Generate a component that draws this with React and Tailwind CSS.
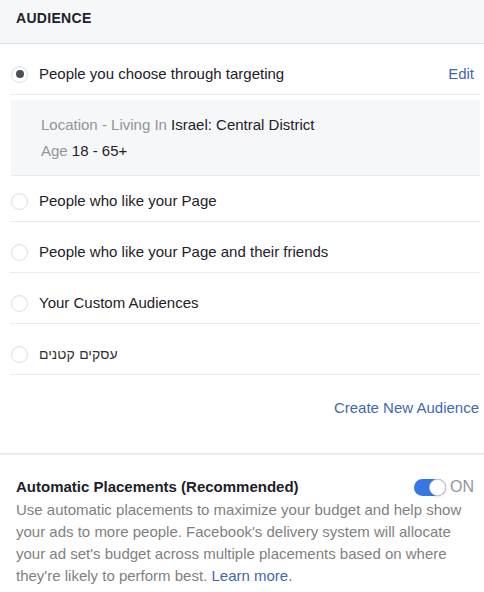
import { useState } from "react";

const options = [
  { label: "People who like your Page" },
  { label: "People who like your Page and their friends" },
  { label: "Your Custom Audiences" },
  { label: "עסקים קטנים", rtl: true },
];

function Radio({ checked }) {
  return (
    <span className="w-[17px] h-[17px] rounded-full border border-[#dddfe2] bg-white flex items-center justify-center shrink-0 shadow-[inset_0_1px_1px_rgba(0,0,0,0.04)]">
      {checked && <span className="w-[8px] h-[8px] rounded-full bg-[#4b4f56]"></span>}
    </span>
  );
}

export default function App() {
  const [selected, setSelected] = useState(-1);
  const [auto, setAuto] = useState(true);

  return (
    <div className="w-[484px] h-[592px] bg-white overflow-hidden font-['Liberation_Sans',Arial,sans-serif] text-[#1d2129]">
      {/* Header */}
      <div className="h-[44px] bg-[#f6f7f9] border-b border-[#dddfe2] flex items-center pl-4 pb-[7px]">
        <h2 className="text-[14px] font-bold tracking-[0.3px]">AUDIENCE</h2>
      </div>

      <div className="ml-[10px] mr-[4px]">
        {/* Targeting row */}
        <div
          onClick={() => setSelected(-1)}
          className="h-[51px] pt-[10px] flex items-center border-b border-[#e9ebee] pl-[1px] cursor-pointer"
        >
          <Radio checked={selected === -1} />
          <span className="ml-[11px] text-[15px] flex-1">People you choose through targeting</span>
          <span className="text-[15px] text-[#4267b2] pr-[6px]">Edit</span>
        </div>

        {/* Targeting summary */}
        <div className="mt-[5px] ml-[1px] h-[76px] bg-[#f6f7f9] border-b border-[#e9ebee] pl-[30px] pt-[12px] text-[15px] leading-[26px]">
          <div>
            <span className="text-[#90949c]">Location - Living In </span>Israel: Central District
          </div>
          <div>
            <span className="text-[#90949c]">Age </span>18 - 65+
          </div>
        </div>

        {options.map((opt, i) => (
          <div
            key={opt.label}
            onClick={() => setSelected(i)}
            className={`${i === 0 ? "h-[46px] pt-[5px]" : "h-[51px] pt-[10px]"} flex items-center border-b border-[#e9ebee] pl-[1px] cursor-pointer`}
          >
            <Radio checked={selected === i} />
            <span
              className={`ml-[11px] ${opt.rtl ? "text-[14px] font-['DejaVu_Sans',sans-serif] font-light text-[#333]" : "text-[15px]"}`}
              dir={opt.rtl ? "rtl" : undefined}
            >
              {opt.label}
            </span>
          </div>
        ))}

        <div className="h-[66px] flex items-center justify-end">
          <span className="text-[15px] text-[#4267b2] pr-[1px]">Create New Audience</span>
        </div>
      </div>

      <div className="mt-[12px] border-t-2 border-[#e9ebee]"></div>

      {/* Placements */}
      <div className="pl-4 pr-[10px] pt-[21px]">
        <div className="flex items-center justify-between">
          <span className="text-[15px] font-bold">Automatic Placements (Recommended)</span>
          <button onClick={() => setAuto(!auto)} className="flex items-center gap-[4px]">
            <span className={`w-[32px] h-[17px] rounded-full relative ${auto ? "bg-[#3578e5]" : "bg-[#ccd0d5]"}`}>
              <span className={`absolute top-0 w-[17px] h-[17px] rounded-full bg-white border border-[#ccd0d5] shadow-sm ${auto ? "right-0" : "left-0"}`}></span>
            </span>
            <span className="text-[16px] text-[#90949c] leading-none">{auto ? "ON" : "OFF"}</span>
          </button>
        </div>
        <p className="text-[15px] leading-[22px] text-[#7f7f7f]">
          Use automatic placements to maximize your budget and help show your ads to more people. Facebook's delivery system will allocate your ad set's budget across multiple placements based on where they're likely to perform best. <span className="text-[#4267b2]">Learn more.</span>
        </p>
      </div>
    </div>
  );
}
